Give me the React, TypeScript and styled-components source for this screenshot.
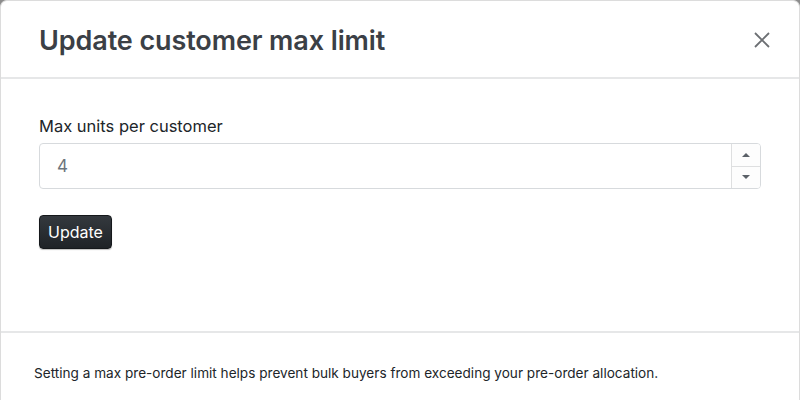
import { useState } from 'react';
import styled, { createGlobalStyle } from 'styled-components';

const GlobalStyle = createGlobalStyle`
  *, *::before, *::after {
    box-sizing: border-box;
  }

  html, body {
    margin: 0;
    padding: 0;
    background: #8c8c8c;
    font-family: Inter, "Noto Sans", sans-serif;
    color: #212529;
  }
`;

const App = () => {
  const [value, setValue] = useState(4);

  return (
    <>
      <GlobalStyle />
      <Modal>
        <Header>
          <Title>Update customer max limit</Title>
          <CloseButton aria-label="Close">
            <svg width="16" height="16" viewBox="0 0 16 16">
              <path d="M1 1 L15 15 M15 1 L1 15" stroke="#6c6f73" strokeWidth="1.8" fill="none" />
            </svg>
          </CloseButton>
        </Header>
        <Body>
          <Label htmlFor="max-units">Max units per customer</Label>
          <NumberField>
            <Input id="max-units" value={value} onChange={(e) => setValue(Number(e.target.value) || 0)} />
            <Spinner>
              <SpinButton onClick={() => setValue(value + 1)}>
                <Arrow $up />
              </SpinButton>
              <SpinButton onClick={() => setValue(Math.max(0, value - 1))}>
                <Arrow />
              </SpinButton>
            </Spinner>
          </NumberField>
          <SubmitButton>Update</SubmitButton>
        </Body>
        <Footer>
          Setting a max pre-order limit helps prevent bulk buyers from exceeding your pre-order allocation.
        </Footer>
      </Modal>
    </>
  );
};

export default App;

const Modal = styled.div`
  background: #fff;
  border: 1px solid #dcdcdc;
  border-bottom: none;
  border-radius: 7px 7px 0 0;
  height: 400px;
  overflow: hidden;
  display: flex;
  flex-direction: column;
`;

const Header = styled.div`
  flex-shrink: 0;
  height: 78px;
  display: flex;
  align-items: center;
  justify-content: space-between;
  padding: 0 29px 0 38px;
  border-bottom: 2px solid #e6e7e8;
`;

const Title = styled.h2`
  margin: 2px 0 0;
  font-size: 27px;
  font-weight: 600;
  color: #3b4046;
  letter-spacing: -0.1px;
`;

const CloseButton = styled.button`
  border: none;
  background: none;
  padding: 0;
  margin-top: 2px;
  display: flex;
  cursor: pointer;
`;

const Body = styled.div`
  flex-shrink: 0;
  height: 254px;
  border-bottom: 2px solid #e6e7e8;
  padding: 37px 38px 0;
  display: flex;
  flex-direction: column;
  align-items: flex-start;
`;

const Label = styled.label`
  font-size: 16.5px;
  color: #212529;
  margin-bottom: 7px;
`;

const NumberField = styled.div`
  align-self: stretch;
  display: flex;
  height: 46px;
  border: 1px solid #d7dadd;
  border-radius: 4px;
  overflow: hidden;
`;

const Input = styled.input`
  flex: 1;
  border: none;
  outline: none;
  padding: 0 17px;
  font-family: inherit;
  font-size: 17px;
  color: #6c757d;
  background: transparent;
`;

const Spinner = styled.div`
  width: 29px;
  display: flex;
  flex-direction: column;
  border-left: 1px solid #dedfe0;
`;

const SpinButton = styled.button`
  flex: 1;
  border: none;
  padding: 0;
  background: #fdfdfd;
  display: flex;
  align-items: center;
  justify-content: center;
  cursor: pointer;

  &:first-child {
    border-bottom: 1px solid #dedfe0;
  }
`;

const Arrow = styled.span<{ $up?: boolean }>`
  width: 0;
  height: 0;
  border-left: 4px solid transparent;
  border-right: 4px solid transparent;
  ${({ $up }) => ($up ? 'border-bottom: 4px solid #5b6168;' : 'border-top: 4px solid #5b6168;')}
`;

const SubmitButton = styled.button`
  margin-top: 26px;
  height: 34px;
  padding: 0 8px;
  font-family: inherit;
  font-size: 16px;
  color: #fff;
  background: linear-gradient(#34393e, #1f2327);
  border: 1px solid #15181b;
  border-radius: 4px;
  box-shadow: 0 1px 1px rgba(0, 0, 0, 0.25);
  cursor: pointer;
`;

const Footer = styled.div`
  padding: 32px 33px 0;
  font-size: 13.6px;
  color: #212529;
`;
